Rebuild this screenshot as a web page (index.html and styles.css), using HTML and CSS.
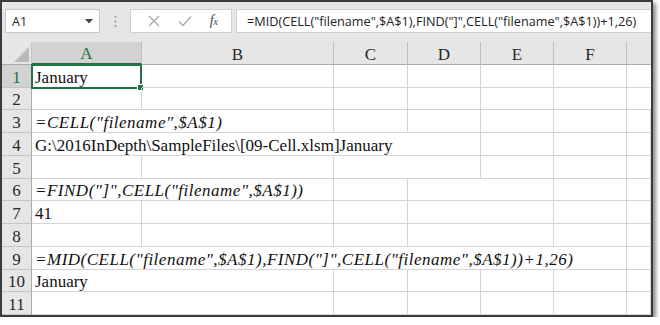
FILE: index.html
```html
<!DOCTYPE html>
<html lang="en">
<head>
    <meta charset="UTF-8">
    <title>CELL filename</title>
    <link rel="stylesheet" href="styles.css">
</head>
<body>
    <div class="sheet">
        <div class="toolbar">
            <div class="namebox">
                <span>A1</span>
                <svg class="caret" width="8" height="5" viewBox="0 0 8 5"><polygon points="0,0 8,0 4,4.5" fill="#444"/></svg>
            </div>
            <div class="grip">
                <svg width="3" height="13" viewBox="0 0 3 13"><circle cx="1.5" cy="2" r="1.1" fill="#9a9a9a"/><circle cx="1.5" cy="6.5" r="1.1" fill="#9a9a9a"/><circle cx="1.5" cy="11" r="1.1" fill="#9a9a9a"/></svg>
            </div>
            <div class="buttons">
                <svg width="12" height="12" viewBox="0 0 12 12"><path d="M1 1 L11 11 M11 1 L1 11" stroke="#a6a6a6" stroke-width="1.3" fill="none"/></svg>
                <svg width="14" height="12" viewBox="0 0 14 12"><path d="M1 6.5 L5 10.5 L13 1.5" stroke="#a6a6a6" stroke-width="1.3" fill="none"/></svg>
                <span class="fx"><i>f</i><i class="x">x</i></span>
            </div>
            <div class="formula">=MID(CELL("filename",$A$1),FIND("]",CELL("filename",$A$1))+1,26)</div>
        </div>

        <div class="grid">
            <div class="corner">
                <svg width="15" height="15" viewBox="0 0 15 15"><polygon points="15,0 15,15 0,15" fill="#b9b9b9"/></svg>
            </div>
            <div class="colhead active">A</div>
            <div class="colhead">B</div>
            <div class="colhead">C</div>
            <div class="colhead">D</div>
            <div class="colhead">E</div>
            <div class="colhead">F</div>
            <div class="colhead last"></div>

            <div class="rowhead active">1</div>
            <div class="cell selected">January<span class="handle"></span></div>
            <div class="cell"></div><div class="cell"></div><div class="cell"></div><div class="cell"></div><div class="cell"></div><div class="cell"></div>

            <div class="rowhead">2</div>
            <div class="cell"></div><div class="cell"></div><div class="cell"></div><div class="cell"></div><div class="cell"></div><div class="cell"></div><div class="cell"></div>

            <div class="rowhead">3</div>
            <div class="cell formula-text span-2">=CELL("filename",$A$1)</div>
            <div class="cell"></div><div class="cell"></div><div class="cell"></div><div class="cell"></div><div class="cell"></div>

            <div class="rowhead">4</div>
            <div class="cell span-4">G:\2016InDepth\SampleFiles\[09-Cell.xlsm]January</div>
            <div class="cell"></div><div class="cell"></div><div class="cell"></div>

            <div class="rowhead">5</div>
            <div class="cell"></div><div class="cell"></div><div class="cell"></div><div class="cell"></div><div class="cell"></div><div class="cell"></div><div class="cell"></div>

            <div class="rowhead">6</div>
            <div class="cell formula-text span-2">=FIND("]",CELL("filename",$A$1))</div>
            <div class="cell"></div><div class="cell"></div><div class="cell"></div><div class="cell"></div><div class="cell"></div>

            <div class="rowhead">7</div>
            <div class="cell">41</div>
            <div class="cell"></div><div class="cell"></div><div class="cell"></div><div class="cell"></div><div class="cell"></div><div class="cell"></div>

            <div class="rowhead">8</div>
            <div class="cell"></div><div class="cell"></div><div class="cell"></div><div class="cell"></div><div class="cell"></div><div class="cell"></div><div class="cell"></div>

            <div class="rowhead">9</div>
            <div class="cell formula-text span-6">=MID(CELL("filename",$A$1),FIND("]",CELL("filename",$A$1))+1,26)</div>
            <div class="cell"></div>

            <div class="rowhead">10</div>
            <div class="cell">January</div>
            <div class="cell"></div><div class="cell"></div><div class="cell"></div><div class="cell"></div><div class="cell"></div><div class="cell"></div>

            <div class="rowhead">11</div>
            <div class="cell"></div><div class="cell"></div><div class="cell"></div><div class="cell"></div><div class="cell"></div><div class="cell"></div><div class="cell"></div>
        </div>
    </div>
</body>
</html>
```

FILE: styles.css
```css
body {
    margin: 0;
    background-color: #ffffff;
}
.sheet {
    width: 649px;
    height: 313px;
    border: 2px solid #3c3c3c;
    box-shadow: 3px 3px 4px rgba(0, 0, 0, 0.45);
    background-color: #ffffff;
    display: flex;
    flex-direction: column;
    overflow: hidden;
}
.toolbar {
    height: 40px;
    background-color: #e6e6e6;
    display: flex;
    align-items: flex-start;
    padding-top: 7px;
    box-sizing: border-box;
}
.namebox {
    width: 95px;
    height: 24px;
    margin-left: 3px;
    background-color: #ffffff;
    border: 1px solid #c8c8c8;
    display: flex;
    align-items: center;
    justify-content: space-between;
    padding: 0 6px 0 6px;
    box-sizing: border-box;
    font-family: "Open Sans", "Liberation Sans", sans-serif;
    font-size: 12.5px;
    color: #222;
}
.grip {
    width: 30px;
    height: 24px;
    display: flex;
    align-items: center;
    justify-content: center;
}
.buttons {
    width: 102px;
    height: 24px;
    background-color: #ffffff;
    border: 1px solid #d0d0d0;
    box-sizing: border-box;
    display: flex;
    align-items: center;
    justify-content: space-around;
    padding: 0 4px 0 8px;
}
.fx {
    font-family: "Liberation Serif", serif;
    font-size: 14px;
    color: #444;
}
.fx .x {
    font-size: 10px;
}
.formula {
    flex: 1;
    height: 24px;
    margin-left: 4px;
    background-color: #ffffff;
    border: 1px solid #d0d0d0;
    border-right: none;
    box-sizing: border-box;
    padding-left: 10px;
    font-family: "Open Sans", "Liberation Sans", sans-serif;
    font-size: 12.7px;
    line-height: 22px;
    color: #222;
    white-space: nowrap;
}
.grid {
    flex: 1;
    display: grid;
    grid-template-columns: 30px 110px 192px 74px 73px 73px 73px 1fr;
    grid-template-rows: 23px repeat(11, 1fr);
    font-family: "Liberation Serif", serif;
    font-size: 17px;
    line-height: 18px;
    color: #111;
}
.corner {
    background-color: #e6e6e6;
    border-right: 1px solid #c4c4c4;
    border-bottom: 1px solid #ababab;
    display: flex;
    align-items: flex-end;
    justify-content: flex-end;
    padding: 0 2px 2px 0;
}
.colhead {
    background-color: #e6e6e6;
    border-right: 1px solid #bdbdbd;
    border-bottom: 1px solid #ababab;
    display: flex;
    align-items: flex-end;
    justify-content: center;
    color: #262626;
}
.colhead.active {
    background-color: #d2d2d2;
    color: #217346;
    border-bottom: 2px solid #217346;
}
.colhead.last {
    border-right: none;
}
.rowhead {
    background-color: #e6e6e6;
    border-right: 1px solid #ababab;
    border-bottom: 1px solid #c4c4c4;
    display: flex;
    align-items: flex-end;
    justify-content: center;
    color: #262626;
}
.rowhead.active {
    background-color: #d2d2d2;
    color: #217346;
}
.cell {
    border-right: 1px solid #d4d4d4;
    border-bottom: 1px solid #d4d4d4;
    display: flex;
    align-items: flex-end;
    padding: 0 0 0 3px;
    white-space: nowrap;
    position: relative;
}
.cell:nth-child(8n) {
    border-right: none;
}
.formula-text {
    font-style: italic;
    letter-spacing: 0.5px;
}
.selected {
    border: 2px solid #217346;
    margin: -1px 0 -1px -1px;
    padding-left: 2px;
}
.handle {
    position: absolute;
    right: -4px;
    bottom: -4px;
    width: 5px;
    height: 5px;
    background-color: #217346;
    border: 1px solid #ffffff;
}
.span-2 { grid-column: span 2; }
.span-4 { grid-column: span 4; }
.span-6 { grid-column: span 6; }
```
